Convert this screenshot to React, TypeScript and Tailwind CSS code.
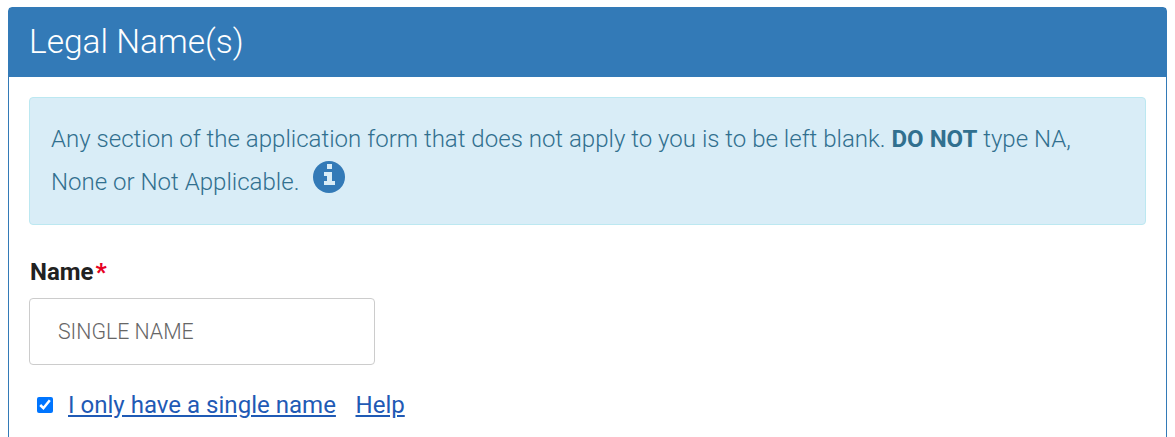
export default function App() {
    return (
        <div className="h-[437px] overflow-hidden bg-white pl-2 pr-2 pt-[7px] font-['Roboto',sans-serif]">
            <div className="h-[500px] rounded-t-[4px] border border-[#337ab7] bg-white">
                <div className="flex h-[69px] items-center bg-[#337ab7] px-5 pb-[1px] text-[33.5px] font-light text-white">
                    Legal Name(s)
                </div>
                <div className="px-5 pt-5">
                    <div className="h-[128px] rounded-[4px] border border-[#bce8f1] bg-[#d9edf7] px-[21px] pt-[21px] text-[24.05px] font-light leading-[41px] text-[#31708f]">
                        <div>
                            Any section of the application form that does not apply to you is to be left blank. <b className="font-bold">DO NOT</b> type NA,
                        </div>
                        <div className="flex items-center leading-[45px]">
                            None or Not Applicable.
                            <svg viewBox="0 0 32 32" className="mb-[12px] ml-[14px] h-8 w-8">
                                <circle cx="16" cy="16" r="16" fill="#337ab7" />
                                <path d="M14 3h5v5h-5zM11 11h8v9h3v4H11v-4h3v-5h-3z" fill="#d9edf7" />
                            </svg>
                        </div>
                    </div>
                    <div className="mt-[31px] flex pl-px text-[24px] font-bold leading-[32px] text-[#212121]">
                        Name<span className="ml-[2px] font-black text-[#e60023]">*</span>
                    </div>
                    <input
                        readOnly
                        value="SINGLE NAME"
                        className="mt-[10px] block h-[67px] w-[346px] rounded-[4px] border border-[#ccc] bg-white px-[28px] text-[21.3px] font-light text-[#666]"
                    />
                    <div className="mt-[24px] flex items-center pl-2 text-[24.05px] leading-[32px] text-[#1f5ab5]">
                        <input type="checkbox" defaultChecked className="h-4 w-4" />
                        <a href="#" className="ml-[15px] underline">I only have a single name</a>
                        <a href="#" className="ml-[19.6px] underline">Help</a>
                    </div>
                </div>
            </div>
        </div>
    )
}
